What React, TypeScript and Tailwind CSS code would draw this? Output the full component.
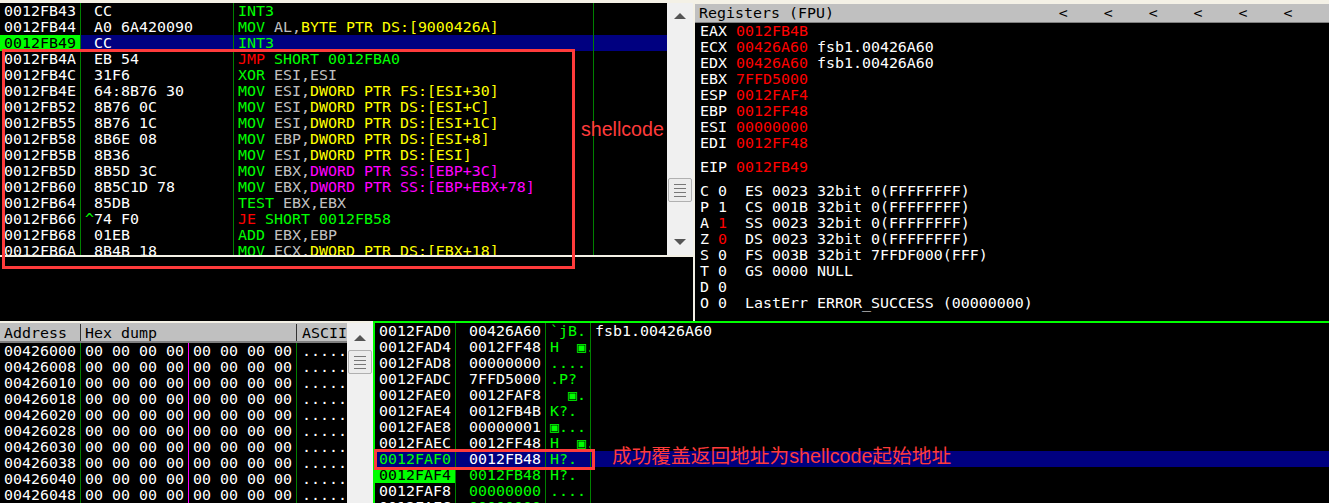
import React from 'react';

const mono = "font-['DejaVu_Sans_Mono',monospace] text-[14.95px] leading-4 whitespace-pre";

const tones = {
  g: 'text-[#00ff00]',
  s: 'text-[#c0c0c0]',
  y: 'text-[#ffff00]',
  m: 'text-[#ff00ff]',
  r: 'text-[#ff0000]',
};
type Tone = keyof typeof tones;
type Seg = [string, Tone];

const disasm: { addr: string; hex: string; code: Seg[]; current?: boolean }[] = [
  { addr: '0012FB43', hex: ' CC', code: [['INT3', 'g']] },
  { addr: '0012FB44', hex: ' A0 6A420090', code: [['MOV ', 'g'], ['AL,', 's'], ['BYTE PTR DS:[9000426A]', 'y']] },
  { addr: '0012FB49', hex: ' CC', code: [['INT3', 'g']], current: true },
  { addr: '0012FB4A', hex: ' EB 54', code: [['JMP ', 'r'], ['SHORT 0012FBA0', 'g']] },
  { addr: '0012FB4C', hex: ' 31F6', code: [['XOR ', 'g'], ['ESI,ESI', 's']] },
  { addr: '0012FB4E', hex: ' 64:8B76 30', code: [['MOV ', 'g'], ['ESI,', 's'], ['DWORD PTR FS:[ESI+30]', 'y']] },
  { addr: '0012FB52', hex: ' 8B76 0C', code: [['MOV ', 'g'], ['ESI,', 's'], ['DWORD PTR DS:[ESI+C]', 'y']] },
  { addr: '0012FB55', hex: ' 8B76 1C', code: [['MOV ', 'g'], ['ESI,', 's'], ['DWORD PTR DS:[ESI+1C]', 'y']] },
  { addr: '0012FB58', hex: ' 8B6E 08', code: [['MOV ', 'g'], ['EBP,', 's'], ['DWORD PTR DS:[ESI+8]', 'y']] },
  { addr: '0012FB5B', hex: ' 8B36', code: [['MOV ', 'g'], ['ESI,', 's'], ['DWORD PTR DS:[ESI]', 'y']] },
  { addr: '0012FB5D', hex: ' 8B5D 3C', code: [['MOV ', 'g'], ['EBX,', 's'], ['DWORD PTR SS:[EBP+3C]', 'm']] },
  { addr: '0012FB60', hex: ' 8B5C1D 78', code: [['MOV ', 'g'], ['EBX,', 's'], ['DWORD PTR SS:[EBP+EBX+78]', 'm']] },
  { addr: '0012FB64', hex: ' 85DB', code: [['TEST ', 'g'], ['EBX,EBX', 's']] },
  { addr: '0012FB66', hex: '^74 F0', code: [['JE ', 'r'], ['SHORT 0012FB58', 'g']] },
  { addr: '0012FB68', hex: ' 01EB', code: [['ADD ', 'g'], ['EBX,EBP', 's']] },
  { addr: '0012FB6A', hex: ' 8B4B 18', code: [['MOV ', 'g'], ['ECX,', 's'], ['DWORD PTR DS:[EBX+18]', 'y']] },
];

const regs: [string, string, string?][] = [
  ['EAX', '0012FB4B'],
  ['ECX', '00426A60', 'fsb1.00426A60'],
  ['EDX', '00426A60', 'fsb1.00426A60'],
  ['EBX', '7FFD5000'],
  ['ESP', '0012FAF4'],
  ['EBP', '0012FF48'],
  ['ESI', '00000000'],
  ['EDI', '0012FF48'],
];

const flags: [string, string, boolean, string][] = [
  ['C', '0', false, 'ES 0023 32bit 0(FFFFFFFF)'],
  ['P', '1', false, 'CS 001B 32bit 0(FFFFFFFF)'],
  ['A', '1', true, 'SS 0023 32bit 0(FFFFFFFF)'],
  ['Z', '0', true, 'DS 0023 32bit 0(FFFFFFFF)'],
  ['S', '0', false, 'FS 003B 32bit 7FFDF000(FFF)'],
  ['T', '0', false, 'GS 0000 NULL'],
  ['D', '0', false, ''],
  ['O', '0', false, 'LastErr ERROR_SUCCESS (00000000)'],
];

const dumpAddrs = ['00426000', '00426008', '00426010', '00426018', '00426020', '00426028', '00426030', '00426038', '00426040', '00426048'];

const stack: { addr: string; val: string; ascii: string; note?: string; mode?: 'ret' | 'top' | 'green' }[] = [
  { addr: '0012FAD0', val: '00426A60', ascii: '`jB.', note: 'fsb1.00426A60' },
  { addr: '0012FAD4', val: '0012FF48', ascii: 'H  ▣.' },
  { addr: '0012FAD8', val: '00000000', ascii: '....' },
  { addr: '0012FADC', val: '7FFD5000', ascii: '.P?' },
  { addr: '0012FAE0', val: '0012FAF8', ascii: '  ▣.' },
  { addr: '0012FAE4', val: '0012FB4B', ascii: 'K?.' },
  { addr: '0012FAE8', val: '00000001', ascii: '▣...' },
  { addr: '0012FAEC', val: '0012FF48', ascii: 'H  ▣.' },
  { addr: '0012FAF0', val: '0012FB48', ascii: 'H?.', mode: 'ret' },
  { addr: '0012FAF4', val: '0012FB48', ascii: 'H?.', mode: 'top' },
  { addr: '0012FAF8', val: '00000000', ascii: '....', mode: 'green' },
  { addr: '0012FAFC', val: '00000000', ascii: '....', mode: 'green' },
];

function Arrow({ down }: { down?: boolean }) {
  return (
    <svg width="12" height="6" viewBox="0 0 12 6" className="shrink-0">
      <path d={down ? 'M0 0H12L6 6Z' : 'M0 6H12L6 0Z'} fill="#555" />
    </svg>
  );
}

function Thumb() {
  return (
    <div className="w-6 h-6 shrink-0 rounded-[2px] border border-[#b0b0b0] bg-[#ececec] flex flex-col items-center justify-center gap-[3px]">
      <div className="w-3 h-px bg-[#777]" />
      <div className="w-3 h-px bg-[#777]" />
      <div className="w-3 h-px bg-[#777]" />
      <div className="w-3 h-px bg-[#777]" />
    </div>
  );
}

function HeaderCell({ className, children }: { className: string; children: React.ReactNode }) {
  return (
    <div className={`h-full overflow-hidden border-r border-[#333] ${className}`}>{children}</div>
  );
}

export default function App() {
  return (
    <div className={`relative w-[1329px] h-[503px] overflow-hidden bg-black text-white ${mono}`}>
      {/* top half */}
      <div className="flex h-[321px]">
        <div className="w-[693px] shrink-0 flex flex-col">
          <div className="h-[3px] bg-[#f4f1e6]" />
          <div className="flex h-[252px]">
            <div className="w-[667px] shrink-0 overflow-hidden">
              {disasm.map((row) => (
                <div key={row.addr} className={`flex h-4 ${row.current ? 'bg-[#000080]' : ''}`}>
                  <div className={`w-[81px] shrink-0 pl-1 border-r border-[#008000] ${row.current ? 'bg-[#00ff00] text-black' : ''}`}>
                    {row.addr}
                  </div>
                  <div className="w-[153px] shrink-0 pl-1 border-r border-[#008000]">
                    {row.hex.startsWith('^') ? (
                      <>
                        <span className="text-[#00ff00]">^</span>
                        {row.hex.slice(1)}
                      </>
                    ) : (
                      row.hex
                    )}
                  </div>
                  <div className="w-[360px] shrink-0 pl-1 border-r border-[#008000]">
                    {row.code.map(([text, tone], i) => (
                      <span key={i} className={tones[tone]}>{text}</span>
                    ))}
                  </div>
                </div>
              ))}
            </div>
            <div className="w-[26px] shrink-0 bg-[#f0f0f0] flex flex-col items-center pt-[10px]">
              <Arrow />
              <div className="mt-[159px]"><Thumb /></div>
              <div className="mt-[37px]"><Arrow down /></div>
            </div>
          </div>
          <div className="h-[2px] bg-[#f4f1e6]" />
        </div>

        <div className="w-[2px] shrink-0 bg-[#f4f1e6]" />

        <div className="flex-1 min-w-0 flex flex-col overflow-hidden">
          <div className="h-1 shrink-0 bg-[#f4f1e6]" />
          <div className="h-[19px] shrink-0 bg-[#c0c0c0] border-b border-[#808080] text-black pl-1 pt-px overflow-hidden">
            {'Registers (FPU)                         <    <    <    <    <    <'}
          </div>
          <div className="pl-[5px]">
            {regs.map(([name, val, note]) => (
              <div key={name} className="h-4">
                {name} <span className="text-[#ff0000]">{val}</span>{note ? ` ${note}` : ''}
              </div>
            ))}
            <div className="h-4 mt-2">
              EIP <span className="text-[#ff0000]">0012FB49</span>
            </div>
            <div className="mt-2">
              {flags.map(([name, val, changed, rest]) => (
                <div key={name} className="h-4">
                  {name} <span className={changed ? 'text-[#ff0000]' : ''}>{val}</span>  {rest}
                </div>
              ))}
            </div>
            <div className="h-4 mt-2">EFL 00000216 (NO,NB,NE,A,NS,PO,GE,G)</div>
          </div>
        </div>
      </div>

      {/* bottom half */}
      <div className="flex h-[182px]">
        <div className="w-[373px] shrink-0 flex flex-col">
          <div className="h-[2px] shrink-0 bg-[#f4f1e6]" />
          <div className="flex flex-1 min-h-0">
            <div className="w-[347px] shrink-0 overflow-hidden">
              <div className="flex h-5 bg-[#c0c0c0] border-b-2 border-[#808080] text-black pt-px">
                <HeaderCell className="w-[81px] pl-1 pt-px">Address</HeaderCell>
                <HeaderCell className="w-[216px] pl-1 pt-px">Hex dump</HeaderCell>
                <div className="flex-1 pl-[5px] pt-px overflow-hidden">ASCII</div>
              </div>
              {dumpAddrs.map((addr) => (
                <div key={addr} className="flex h-4">
                  <div className="w-[81px] shrink-0 pl-1 border-r border-[#008000]">{addr}</div>
                  <div className="w-[108px] shrink-0 pl-1 border-r border-[#ff00ff] overflow-hidden">00 00 00 00</div>
                  <div className="w-[108px] shrink-0 pl-1 border-r border-[#008000] overflow-hidden">00 00 00 00</div>
                  <div className="flex-1 pl-[5px] overflow-hidden">.....</div>
                </div>
              ))}
            </div>
            <div className="w-[26px] shrink-0 bg-[#f0f0f0] flex flex-col items-center pt-3">
              <Arrow />
              <div className="mt-[9px]"><Thumb /></div>
            </div>
          </div>
        </div>

        <div className="flex-1 min-w-0 border-l-2 border-t-2 border-[#00ff00] overflow-hidden">
          {stack.map((row) => (
            <div key={row.addr} className={`flex h-4 ${row.mode === 'ret' ? 'bg-[#000080]' : ''}`}>
              <div
                className={`w-[81px] shrink-0 pl-1 border-r border-[#008000] ${
                  row.mode === 'ret' ? 'text-[#00ff00]' : row.mode === 'top' ? 'bg-[#00ff00] text-black' : ''
                }`}
              >
                {row.addr}
              </div>
              <div
                className={`w-[90px] shrink-0 pl-[13px] border-r border-[#008000] ${
                  row.mode === 'top' || row.mode === 'green' ? 'text-[#00ff00]' : ''
                }`}
              >
                {row.val}
              </div>
              <div className="w-[45px] shrink-0 pl-1 border-r border-[#008000] text-[#00ff00] overflow-hidden">{row.ascii}</div>
              <div className="pl-1">{row.note}</div>
            </div>
          ))}
        </div>
      </div>

      {/* red annotations drawn over the capture */}
      <div className="absolute left-[2px] top-[49px] w-[573px] h-[220px] border-[3px] border-[#ff3b3b]" />
      <div className="absolute left-[581px] top-[117px] font-['Liberation_Sans','Noto_Sans_CJK_SC',sans-serif] text-[19.6px] leading-6 text-[#ff3b3b]">
        shellcode
      </div>
      <div className="absolute left-[374px] top-[449px] w-[221px] h-[21px] border-[3px] border-[#ff3b3b]" />
      <div className="absolute left-[612px] top-[444px] font-['Liberation_Sans','Noto_Sans_CJK_SC',sans-serif] text-[19.7px] leading-6 text-[#ff3b3b]">
        成功覆盖返回地址为shellcode起始地址
      </div>
    </div>
  );
}
